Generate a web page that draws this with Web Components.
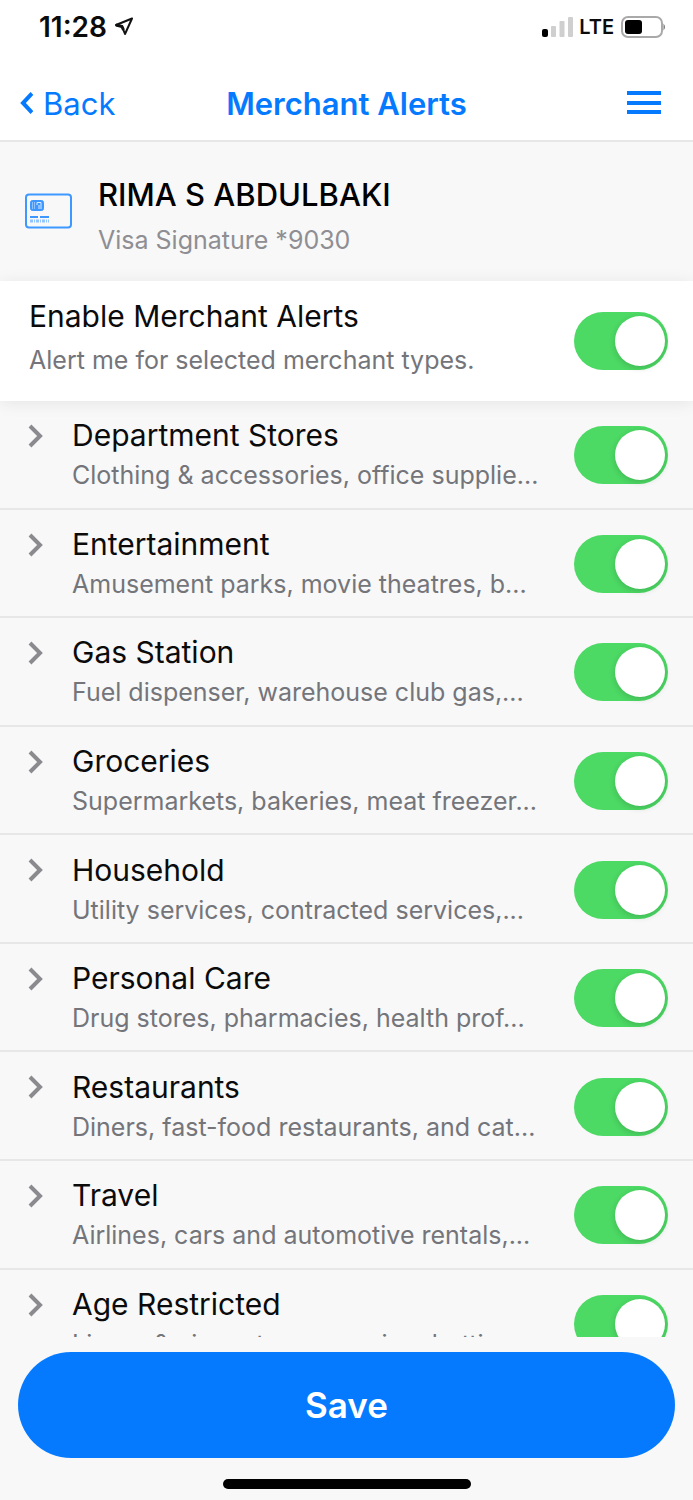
<!DOCTYPE html>
<html lang="en">
<head>
<meta charset="utf-8">
<meta name="viewport" content="width=device-width, initial-scale=1">
<title>Merchant Alerts</title>
<style>
    body {
        --blue: #057aff;
        --green: #4cd964;
        --page: #f8f8f8;
        --line: #e7e7e7;
        --muted: #74757a;
        margin: 0;
        background-color: var(--page);
        color: #0b0b0b;
        font-family: Inter, "Liberation Sans", sans-serif;
    }
</style>
</head>
<body>

<alerts-screen>
    <status-bar slot="top" time="11:28" network="LTE"></status-bar>
    <nav-bar slot="top">Merchant Alerts</nav-bar>
    <card-summary slot="top">
        RIMA S ABDULBAKI
        <span slot="detail">Visa Signature *9030</span>
    </card-summary>
    <switch-row slot="top" main>
        Enable Merchant Alerts
        <span slot="detail">Alert me for selected merchant types.</span>
    </switch-row>

    <switch-row>Department Stores<span slot="detail">Clothing &amp; accessories, office supplie...</span></switch-row>
    <switch-row>Entertainment<span slot="detail">Amusement parks, movie theatres, b...</span></switch-row>
    <switch-row>Gas Station<span slot="detail">Fuel dispenser, warehouse club gas,...</span></switch-row>
    <switch-row>Groceries<span slot="detail">Supermarkets, bakeries, meat freezer...</span></switch-row>
    <switch-row>Household<span slot="detail">Utility services, contracted services,...</span></switch-row>
    <switch-row>Personal Care<span slot="detail">Drug stores, pharmacies, health prof...</span></switch-row>
    <switch-row>Restaurants<span slot="detail">Diners, fast-food restaurants, and cat...</span></switch-row>
    <switch-row>Travel<span slot="detail">Airlines, cars and automotive rentals,...</span></switch-row>
    <switch-row>Age Restricted<span slot="detail">Liquor &amp; cigar stores, gaming, betti...</span></switch-row>

    <save-bar slot="bottom">Save</save-bar>
</alerts-screen>

<script>
class AlertsScreen extends HTMLElement {
    constructor() {
        super();
        this.attachShadow({ mode: 'open' });
    }

    connectedCallback() {
        this.shadowRoot.innerHTML = `
        <style>
            :host {
                display: flex;
                flex-direction: column;
                height: 100vh;
            }

            header {
                position: relative;
                z-index: 1;
            }

            /* only the list scrolls, the save button stays in view */
            main {
                flex: 1;
                min-height: 0;
                display: grid;
                grid-auto-rows: 11.6%;
                overflow-y: auto;
                scrollbar-width: none;
            }
        </style>
        <header><slot name="top"></slot></header>
        <main><slot></slot></main>
        <footer><slot name="bottom"></slot></footer>
        `
    }
}

class StatusBar extends HTMLElement {
    constructor() {
        super();
        this.attachShadow({ mode: 'open' });
    }

    connectedCallback() {
        this.shadowRoot.innerHTML = `
        <style>
            :host {
                display: flex;
                justify-content: space-between;
                padding: 12px 27px 24px 39px;
                background-color: #fff;
                line-height: 30px;
            }

            div {
                display: flex;
                align-items: center;
                gap: 6px;
            }

            #time {
                font-size: 28px;
                font-weight: 600;
            }

            #network {
                font-size: 20px;
                font-weight: 600;
            }

            svg {
                display: block;
            }
        </style>
        <div>
            <span id="time">${this.getAttribute('time')}</span>
            <svg width="20" height="20" viewBox="0 0 20 20" fill="none" stroke="#111" stroke-width="2" stroke-linejoin="round">
                <path d="M19 1.500 3 8 9 9.500 12 17Z"/>
                <path d="M3 8 9 9.500 10.500 13" stroke-width="3"/>
            </svg>
        </div>
        <div>
            <svg width="32" height="20" viewBox="0 0 32 20" fill="#cfcfcf">
                <rect x="1" y="12" width="6" height="8" rx="2" fill="#000"/>
                <rect x="10" y="9" width="5" height="11" rx="1"/>
                <rect x="18.500" y="4" width="5" height="16" rx="1"/>
                <rect x="27" y="0" width="5" height="20" rx="1"/>
            </svg>
            <span id="network">${this.getAttribute('network')}</span>
            <svg width="46" height="22" viewBox="0 0 46 22">
                <rect x="2" y="1" width="40" height="20" rx="6" fill="none" stroke="#a9a9a9" stroke-width="2"/>
                <rect x="5" y="4" width="17" height="14" rx="3" fill="#000"/>
                <path d="M43.500 7.500q3 3.500 0 7z" fill="#777"/>
            </svg>
        </div>
        `
    }
}

class NavBar extends HTMLElement {
    constructor() {
        super();
        this.attachShadow({ mode: 'open' });
    }

    connectedCallback() {
        this.shadowRoot.innerHTML = `
        <style>
            :host {
                display: grid;
                grid-template-columns: 1fr auto 1fr;
                align-items: center;
                height: 74px;
                padding: 0 20px;
                background-color: #fff;
                border-bottom: 2px solid var(--line);
                color: var(--blue);
            }

            a {
                display: flex;
                align-items: center;
                gap: 10px;
                color: inherit;
                font-size: 31px;
                text-decoration: none;
            }

            h1 {
                margin: 0;
                font-size: 31px;
                font-weight: 600;
            }

            button {
                justify-self: end;
                padding: 0 12px;
                border: 0;
                background: none;
                color: inherit;
            }

            svg {
                display: block;
            }
        </style>
        <a href="#back">
            <svg width="13" height="22" viewBox="0 0 13 22" fill="none" stroke="currentColor" stroke-width="4">
                <path d="M12 1.500 3 11 12 20.500"/>
            </svg>
            Back
        </a>
        <h1><slot></slot></h1>
        <button type="button" aria-label="Menu">
            <svg width="34" height="24" viewBox="0 0 34 24" fill="currentColor">
                <path d="M0 0h34v4H0zM0 10h34v4H0zM0 19h34v4H0z"/>
            </svg>
        </button>
        `
    }
}

class CardSummary extends HTMLElement {
    constructor() {
        super();
        this.attachShadow({ mode: 'open' });
    }

    connectedCallback() {
        this.shadowRoot.innerHTML = `
        <style>
            :host {
                display: flex;
                align-items: flex-start;
                gap: 26px;
                padding: 33px 24px 16px;
            }

            svg {
                flex: none;
                margin-top: 18px;
            }

            h2 {
                margin: 0;
                color: #000;
                font-size: 31px;
                font-weight: 500;
                line-height: 40px;
            }

            p {
                margin: 0;
                color: #8e8e93;
                font-size: 25px;
                line-height: 50px;
            }
        </style>
        <svg width="48" height="36" viewBox="0 0 48 36" fill="none" stroke="#3d98ff">
            <rect x="2" y="1.500" width="45" height="33" rx="3" stroke-width="2"/>
            <rect x="6.500" y="7.500" width="13" height="10" rx="2" fill="#3d98ff"/>
            <path d="M8.500 9v7M10.500 9v7" stroke="#8fc3ff"/>
            <path d="M13 12V9.500h4V16M15 12v4" stroke="#dcecff"/>
            <path d="M6 24h8M16 24h9" stroke-width="2"/>
            <path d="M6 28h19" stroke-width="3" stroke-dasharray="3 1 1 1" opacity=".55"/>
        </svg>
        <div>
            <h2><slot></slot></h2>
            <p><slot name="detail"></slot></p>
        </div>
        `
    }
}

class SwitchRow extends HTMLElement {
    constructor() {
        super();
        this.attachShadow({ mode: 'open' });
    }

    connectedCallback() {
        const main = this.hasAttribute('main')
        this.shadowRoot.innerHTML = `
        <style>
            :host {
                display: flex;
                align-items: center;
                box-sizing: border-box;
                padding: 2px 25px 0 28px;
                border-bottom: 2px solid var(--line);
            }

            :host([main]) {
                min-height: 120px;
                padding: 0 25px 0 29px;
                border: 0;
                background-color: #fff;
                box-shadow: 0 2px 16px rgba(0,0,0,0.08);
            }

            #open {
                align-self: flex-start;
                width: 44px;
                padding: 21px 0 0;
                border: 0;
                background: none;
                color: #8a8a8f;
            }

            #open svg {
                display: block;
            }

            label {
                flex: 1;
                min-width: 0;
                font-size: 30px;
                line-height: 40px;
                white-space: nowrap;
            }

            :host([main]) label {
                padding-bottom: 2px;
            }

            #detail {
                display: block;
                overflow: hidden;
                color: var(--muted);
                font-size: 25px;
                text-overflow: ellipsis;
            }

            :host([main]) #detail {
                line-height: 48px;
            }

            input {
                appearance: none;
                flex: none;
                width: 94px;
                height: 58px;
                margin: 0;
                padding: 4px 3px;
                box-sizing: border-box;
                border-radius: 29px;
                background-color: #e5e5ea;
            }

            input::before {
                content: "";
                display: block;
                width: 50px;
                height: 50px;
                border-radius: 50%;
                background-color: #fff;
                box-shadow: 0 2px 6px rgba(0,0,0,0.16);
            }

            input:checked {
                background-color: var(--green);
            }

            input:checked::before {
                margin-left: auto;
            }
        </style>
        ${main ? '' : `
        <button id="open" type="button" aria-label="Show details">
            <svg width="15" height="24" viewBox="0 0 15 24" fill="none" stroke="currentColor" stroke-width="4">
                <path d="M2 2 12 12 2 22"/>
            </svg>
        </button>`}
        <label for="switch">
            <slot></slot>
            <span id="detail"><slot name="detail"></slot></span>
        </label>
        <input id="switch" type="checkbox" role="switch" checked>
        `
    }
}

class SaveBar extends HTMLElement {
    constructor() {
        super();
        this.attachShadow({ mode: 'open' });
    }

    connectedCallback() {
        this.shadowRoot.innerHTML = `
        <style>
            :host {
                display: flex;
                flex-direction: column;
                gap: 21px;
                padding: 15px 18px 11px;
            }

            button {
                height: 106px;
                border: 0;
                border-radius: 53px;
                background-color: var(--blue);
                color: #fff;
                font: 600 35px Inter, "Liberation Sans", sans-serif;
            }

            #home {
                align-self: center;
                width: 248px;
                height: 10px;
                border-radius: 5px;
                background-color: #000;
            }
        </style>
        <button type="button"><slot></slot></button>
        <div id="home"></div>
        `
    }
}

customElements.define('alerts-screen', AlertsScreen);
customElements.define('status-bar', StatusBar);
customElements.define('nav-bar', NavBar);
customElements.define('card-summary', CardSummary);
customElements.define('switch-row', SwitchRow);
customElements.define('save-bar', SaveBar);
</script>
</body>
</html>
